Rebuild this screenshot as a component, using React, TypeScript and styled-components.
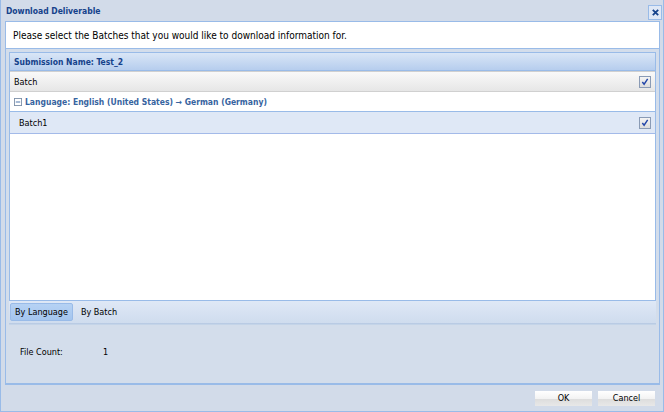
import styled, { createGlobalStyle } from "styled-components";

const Global = createGlobalStyle`
  html, body { margin: 0; padding: 0; }
  body {
    width: 664px;
    height: 412px;
    overflow: hidden;
    font-family: "DejaVu Sans Condensed", "DejaVu Sans", sans-serif;
    background: #d3dcea;
  }
`;

// outer window
const Window = styled.div`
  box-sizing: border-box;
  width: 664px;
  height: 412px;
  display: flex;
  flex-direction: column;
  background: #d2dbe9;
  border: 1px solid #99bbe8;
  border-top: none;
`;

const TitleBar = styled.div`
  height: 21px;
  display: flex;
  align-items: center;
  justify-content: space-between;
  padding: 0 1px 0 5px;
  font-size: 8.5px;
  font-weight: bold;
  color: #15428b;
`;

const CloseButton = styled.div`
  width: 12px;
  height: 13px;
  margin-top: 3px;
  border: 1px solid #99bbe8;
  background: #dfe8f6;
  display: flex;
  align-items: center;
  justify-content: center;
`;

const Body = styled.div`
  flex: 1;
  display: flex;
  flex-direction: column;
  padding: 0 3px 0 4px;
`;

const Intro = styled.div`
  height: 26px;
  display: flex;
  align-items: center;
  padding-left: 7px;
  background: #fff;
  border: 1px solid #99bbe8;
  font-size: 10px;
  color: #000;
`;

const Panel = styled.div`
  flex: 1;
  display: flex;
  flex-direction: column;
  border: 1px solid #99bbe8;
  border-top: none;
  border-bottom-width: 2px;
  padding: 0 3px 0 3px;
  background: #d3ddeb;
`;

const Grid = styled.div`
  margin-top: 3px;
  height: 247px;
  display: flex;
  flex-direction: column;
  border: 1px solid #99bbe8;
  background: #fff;
`;

const GridTitle = styled.div`
  height: 17px;
  display: flex;
  align-items: center;
  padding-left: 4px;
  font-size: 8.5px;
  font-weight: bold;
  color: #15428b;
  background: linear-gradient(#d9e6f6, #b6cdee);
  border-bottom: 1px solid #99bbe8;
`;

const Row = styled.div<{ $tone: "head" | "group" | "item" }>`
  display: flex;
  align-items: center;
  justify-content: space-between;
  font-size: ${(p) => (p.$tone === "group" ? "8.5px" : "9px")};
  padding: 0 4px 0 ${(p) => (p.$tone === "item" ? "9px" : "4px")};
  height: ${(p) => (p.$tone === "item" ? "21px" : "19px")};
  color: ${(p) => (p.$tone === "group" ? "#3764a0" : "#000")};
  font-weight: ${(p) => (p.$tone === "group" ? "bold" : "normal")};
  background: ${(p) =>
    p.$tone === "head"
      ? "linear-gradient(#f9f9f9, #e6e6e6)"
      : p.$tone === "item"
      ? "#dfe8f6"
      : "#fff"};
  border-top: ${(p) => (p.$tone === "head" ? "1px solid #d0d0d0" : "none")};
  border-bottom: 1px solid
    ${(p) => (p.$tone === "head" ? "#d0d0d0" : p.$tone === "group" ? "#99bbe8" : "#a3bae9")};
`;

const GroupLabel = styled.span`
  display: flex;
  align-items: center;
  gap: 3px;
`;

const CheckBox = styled.span`
  width: 10px;
  height: 10px;
  border: 1px solid #8a9bb5;
  background: linear-gradient(#f4f4f4, #dcdcdc);
  display: flex;
  align-items: center;
  justify-content: center;
`;

const Toolbar = styled.div`
  height: 22px;
  display: flex;
  align-items: center;
  gap: 3px;
  padding-left: 1px;
  background: linear-gradient(#dfe8f6, #cfdcee);
  border-bottom: 1px solid #b9cbe4;
`;

const ToggleButton = styled.div<{ $active?: boolean }>`
  height: 16px;
  display: flex;
  align-items: center;
  padding: 0 4px;
  font-size: 9px;
  color: #000;
  border: 1px solid ${(p) => (p.$active ? "#99bbe8" : "transparent")};
  border-radius: 2px;
  background: ${(p) => (p.$active ? "linear-gradient(#b6d2f4, #a4c5ee)" : "transparent")};
`;

const Info = styled.div`
  flex: 1;
  display: flex;
  align-items: center;
  padding: 0 0 5px 11px;
  font-size: 9px;
  color: #000;
  border-top: 1px solid #c4d4e8;
`;

const InfoLabel = styled.span`
  width: 83px;
`;

const Footer = styled.div`
  height: 26px;
  display: flex;
  align-items: center;
  justify-content: flex-end;
  gap: 6px;
  padding-right: 5px;
`;

const Button = styled.div`
  width: 57px;
  height: 15px;
  display: flex;
  align-items: center;
  justify-content: center;
  font-size: 9px;
  color: #000;
  background: linear-gradient(#ffffff 0%, #f3f3f3 50%, #dcdcdc 51%, #e8e8e8 100%);
`;

const Check = () => (
  <CheckBox>
    <svg width="8" height="8" viewBox="0 0 9 9">
      <path d="M1.5 4.5 L3.5 7 L7.5 1" fill="none" stroke="#2245a8" strokeWidth="1.6" />
    </svg>
  </CheckBox>
);

export default function App() {
  return (
    <>
      <Global />
      <Window>
        <TitleBar>
          <span>Download Deliverable</span>
          <CloseButton>
            <svg width="9" height="9" viewBox="0 0 10 10">
              <path d="M2 2 L8 8 M8 2 L2 8" stroke="#15428b" strokeWidth="2" />
            </svg>
          </CloseButton>
        </TitleBar>
        <Body>
          <Intro>Please select the Batches that you would like to download information for.</Intro>
          <Panel>
            <Grid>
              <GridTitle>Submission Name: Test_2</GridTitle>
              <Row $tone="head">
                <span>Batch</span>
                <Check />
              </Row>
              <Row $tone="group">
                <GroupLabel>
                  <svg width="8" height="8" viewBox="0 0 9 9">
                    <rect x="0.5" y="0.5" width="8" height="8" fill="#fff" stroke="#7c8fa8" />
                    <path d="M2 4.5 H7" stroke="#3764a0" />
                  </svg>
                  Language: English (United States) → German (Germany)
                </GroupLabel>
              </Row>
              <Row $tone="item">
                <span>Batch1</span>
                <Check />
              </Row>
            </Grid>
            <Toolbar>
              <ToggleButton $active>By Language</ToggleButton>
              <ToggleButton>By Batch</ToggleButton>
            </Toolbar>
            <Info>
              <InfoLabel>File Count:</InfoLabel>
              <span>1</span>
            </Info>
          </Panel>
          <Footer>
            <Button>OK</Button>
            <Button>Cancel</Button>
          </Footer>
        </Body>
      </Window>
    </>
  );
}
